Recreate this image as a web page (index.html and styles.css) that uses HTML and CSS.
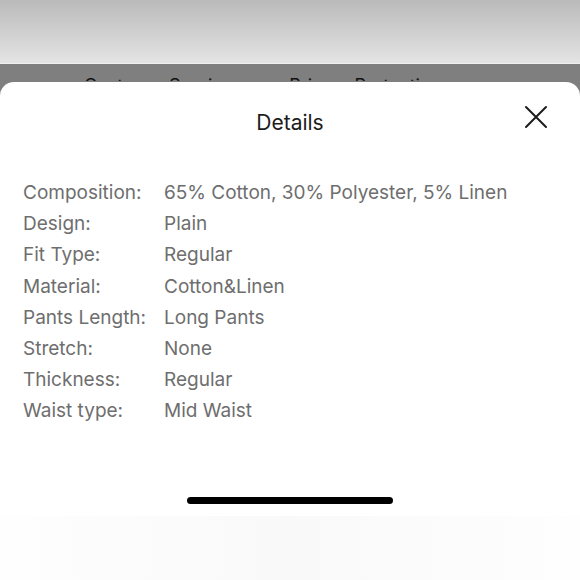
FILE: index.html
```html
<!DOCTYPE html>
<html>
<head>
<meta charset="utf-8">
<link rel="stylesheet" href="styles.css">
</head>
<body>
<div class="page">
  <div class="topbar"></div>
  <div class="band">
    <span class="peek peek-a">Customer Service</span>
    <span class="peek peek-b">Privacy Protection</span>
  </div>
  <div class="sheet">
    <div class="sheet-head">
      <h1 class="title">Details</h1>
      <button class="close" aria-label="Close">
        <svg width="24" height="24" viewBox="0 0 24 24"><path d="M2 2L22 22M22 2L2 22" stroke="#1c1c1c" stroke-width="2" stroke-linecap="round" fill="none"/></svg>
      </button>
    </div>
    <dl class="specs">
      <dt>Composition:</dt><dd>65% Cotton, 30% Polyester, 5% Linen</dd>
      <dt>Design:</dt><dd>Plain</dd>
      <dt>Fit Type:</dt><dd>Regular</dd>
      <dt>Material:</dt><dd>Cotton&amp;Linen</dd>
      <dt>Pants Length:</dt><dd>Long Pants</dd>
      <dt>Stretch:</dt><dd>None</dd>
      <dt>Thickness:</dt><dd>Regular</dd>
      <dt>Waist type:</dt><dd>Mid Waist</dd>
    </dl>
    <div class="home-wrap"><div class="home"></div></div>
    <div class="footer-fade"></div>
  </div>
</div>
</body>
</html>
```
FILE: styles.css
```css
html, body {
  margin: 0;
  padding: 0;
  background: #ffffff;
}
body {
  font-family: Inter, "Liberation Sans", sans-serif;
  width: 580px;
  height: 580px;
  overflow: hidden;
}
.page {
  display: flex;
  flex-direction: column;
  height: 580px;
  background: #7f7f7f;
}
.topbar {
  height: 63px;
  background: linear-gradient(#bababa, #e4e4e4);
  border-bottom: 1px solid #efefef;
}
.band {
  height: 17px;
  overflow: hidden;
  display: flex;
  font-size: 18px;
  color: #111;
}
.peek {
  display: block;
  line-height: 18px;
  margin-top: 13px;
  white-space: nowrap;
  word-spacing: -3px;
}
.peek-a { margin-left: 84px; }
.peek-b { margin-left: 56px; }
.sheet {
  flex: 1;
  background: #ffffff;
  border-radius: 14px 14px 0 0;
  margin-top: 1px;
  display: flex;
  flex-direction: column;
  position: relative;
}
.sheet-head {
  height: 80px;
  display: flex;
  align-items: center;
  justify-content: center;
  position: relative;
}
.title {
  margin: 0;
  font-size: 21px;
  font-weight: 400;
  color: #1c1c1c;
}
.close {
  position: absolute;
  right: 32px;
  top: 23px;
  border: 0;
  background: none;
  padding: 0;
  width: 24px;
  height: 24px;
}
.close svg { display: block; }
.specs {
  margin: 15px 0 0 23px;
  display: grid;
  grid-template-columns: 141px auto;
  font-size: 19px;
  line-height: 31.2px;
  color: #6e6e6e;
}
.specs dt, .specs dd { margin: 0; }
.home-wrap {
  display: flex;
  justify-content: center;
  margin-top: 70px;
}
.home {
  width: 206px;
  height: 7px;
  border-radius: 4px;
  background: #000;
}
.footer-fade {
  flex: 1;
  margin-top: 12px;
  background: linear-gradient(90deg, #fefefe, #f9f9f9 50%, #fefefe);
}
```
